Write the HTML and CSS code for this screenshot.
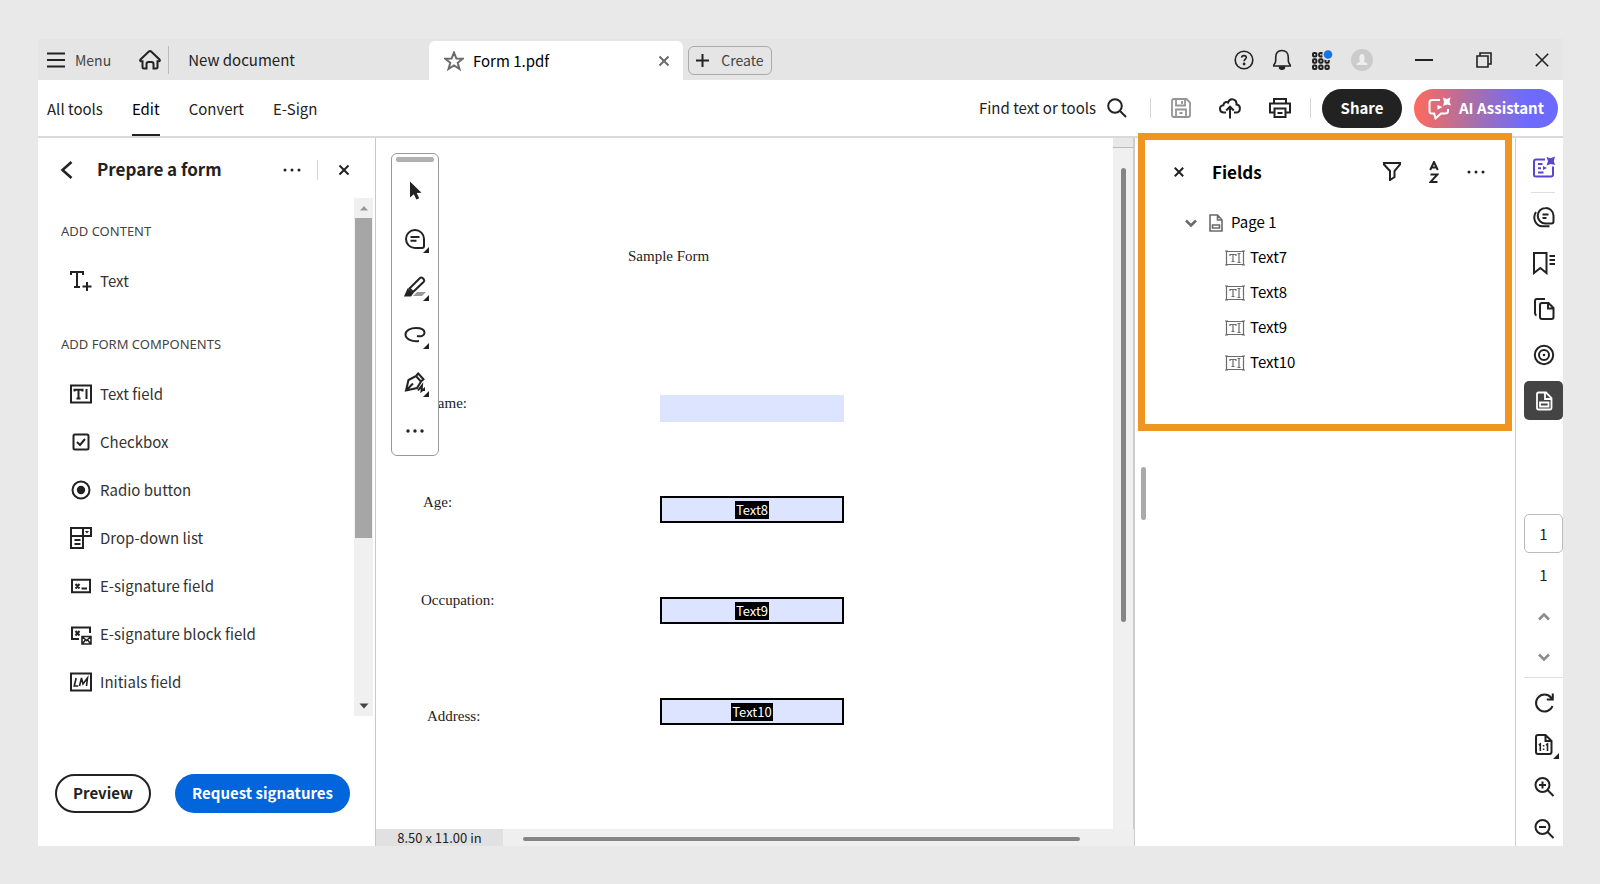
FILE: index.html
```html
<!DOCTYPE html>
<html lang="en">
<head>
<meta charset="utf-8">
<meta name="viewport" content="width=device-width, initial-scale=1">
<title>Form 1.pdf</title>
<link rel="stylesheet" href="styles.css">
</head>
<body>
<div class="app">
  <header class="titlebar">
    <button class="menu-btn"><svg class="icon" width="18" height="16" viewBox="0 0 18 16"><path d="M0 1.500h18M0 8h18M0 14.500h18"/></svg>Menu</button>
    <button class="home-btn" aria-label="Home"><svg class="icon" width="22" height="20" viewBox="0 0 22 20"><path d="M1.500 9.500 9.600 1.700q1.400-1.300 2.800 0l8.100 7.800q1 1.500-.5 1.800h-1.500v5.700q0 1.500-1.500 1.500h-2.500v-4.500q0-2-2-2h-3q-2 0-2 2v4.500H5q-1.500 0-1.500-1.500v-5.700H2q-1.500-.3-.5-1.800z"/></svg></button>
    <button class="tab-plain">New document</button>
    <div class="tab-active">
      <svg class="icon grey" width="20" height="20" viewBox="0 0 20 20"><path d="m10 1.500 2.400 6 6.300.3-5 4 1.800 6.200-5.500-3.500L4.500 18l1.800-6.200-5-4 6.300-.3z"/></svg>
      <span class="tab-name">Form 1.pdf</span>
      <button class="icon-btn" aria-label="Close tab"><svg class="icon grey" width="12" height="12" viewBox="0 0 12 12"><path d="m1.500 1.500 9 9m0-9-9 9"/></svg></button>
    </div>
    <button class="create-btn"><svg class="icon" width="13" height="13" viewBox="0 0 13 13"><path d="M6.500 0v13M0 6.500h13"/></svg>Create</button>
    <div class="title-actions">
      <button class="icon-btn" aria-label="Help"><svg class="icon thin" width="20" height="20" viewBox="0 0 20 20"><circle cx="10" cy="10" r="8.800"/><path d="M7.600 7.600q.2-2 2.400-2t2.300 1.900c0 1.600-2.200 1.700-2.200 3.700"/><circle class="solid" cx="10.100" cy="14" r=".6"/></svg></button>
      <button class="icon-btn" aria-label="Notifications"><svg class="icon thin" width="20" height="22" viewBox="0 0 20 22"><path d="M1.700 17h16.600c.5-1.500-2-2-2-5.500V8.500c0-5-3-7-6.300-7s-6.300 2-6.300 7v3c0 3.500-2.500 4-2 5.500z"/><path class="solid" d="M7.500 18h5c0 3-5 3-5 0z"/></svg></button>
      <button class="icon-btn" aria-label="Apps"><svg class="icon" width="23" height="21" viewBox="-2 0 23 21"><g><rect x="1" y="3" width="3.400" height="3.400" rx="1"/><rect x="7.200" y="3" width="3.400" height="3.400" rx="1"/><rect x="1" y="9.300" width="3.400" height="3.400" rx="1"/><rect x="7.200" y="9.300" width="3.400" height="3.400" rx="1"/><rect x="13.400" y="9.300" width="3.400" height="3.400" rx="1"/><rect x="1" y="15.600" width="3.400" height="3.400" rx="1"/><rect x="7.200" y="15.600" width="3.400" height="3.400" rx="1"/><rect x="13.400" y="15.600" width="3.400" height="3.400" rx="1"/></g><circle cx="15.500" cy="5" r="5.300" fill="#e5e5e5" stroke="none"/><circle cx="16" cy="4.500" r="4.300" fill="#1473e6" stroke="none"/></svg></button>
      <button class="icon-btn" aria-label="Account"><svg width="22" height="22" viewBox="0 0 22 22"><circle cx="11" cy="11" r="11" fill="#cbcbcb"/><path fill="#eee" d="M5.500 16v-1.500l3.800-2C8 11 7.600 5 11 5s3 6 1.700 7.500l3.800 2V16z"/></svg></button>
    </div>
    <div class="window-actions">
      <button class="icon-btn" aria-label="Minimize"><svg class="icon" width="18" height="18" viewBox="0 0 18 18"><path d="M0 9h18"/></svg></button>
      <button class="icon-btn" aria-label="Restore"><svg class="icon thin" width="16" height="16" viewBox="0 0 16 16"><path d="M1 4h11v11H1zM4 4V1h11v11h-3"/></svg></button>
      <button class="icon-btn" aria-label="Close"><svg class="icon thin" width="14" height="14" viewBox="0 0 14 14"><path d="m.8.8 12.400 12.400m0-12.400L.8 13.200"/></svg></button>
    </div>
  </header>

  <div class="toolbar">
    <nav class="modes">
      <a class="mode" href="#tools">All tools</a>
      <a class="mode current" href="#edit">Edit</a>
      <a class="mode" href="#convert">Convert</a>
      <a class="mode" href="#sign">E-Sign</a>
    </nav>
    <div class="toolbar-actions">
      <button class="find-btn">Find text or tools<svg class="icon" width="20" height="20" viewBox="0 0 20 20"><circle cx="8" cy="8" r="6.800"/><path d="m13 13 6 6"/></svg></button>
      <span class="vrule"></span>
      <button class="icon-btn" aria-label="Save"><svg class="icon pale" width="20" height="20" viewBox="0 0 20 20"><path d="M3 1h12.500L19 4.500V17q0 2-2 2H3q-2 0-2-2V3q0-2 2-2zM5 1.500v6h9v-6M11 3v3M5 18.500v-7h10v7M8.500 15h3"/></svg></button>
      <button class="icon-btn upload" aria-label="Upload"><svg class="icon" width="22" height="21" viewBox="0 0 22 21"><path d="M7 14.500H5C-.2 14.500-.2 7.300 4.400 7.200 4.500 4 8 3.400 9 4.600 11-1 18 1 17.500 6.500c4.700.5 4.500 8-.5 8h-2M11 20.500V9M7.200 12.500 11 8.700l3.800 3.800"/></svg></button>
      <button class="icon-btn print" aria-label="Print"><svg class="icon" width="22" height="20" viewBox="0 0 22 20"><path d="M5 5V1h12v4M5 14.500H1V5.500h20v9h-4M5.500 10.500h11V19h-11zM8.500 15h5"/></svg></button>
      <span class="vrule"></span>
      <button class="pill share">Share</button>
      <button class="pill ai"><svg class="icon" width="24" height="23" viewBox="0 0 24 23"><path d="M12 3H4Q1.500 3 1.500 5.500V14q0 2.500 2.500 2.500h2.200l1.300 5 5.500-5h4q3 0 3-2.500v-2"/><path class="solid" d="m15 .5 3.500 1.500L22.500.500 21.500 4.500l1.500 4-4-1L15 9l1-4zM9.500 8l5 2-5 2.800z"/></svg>AI Assistant</button>
    </div>
  </div>

  <main class="workspace">
    <aside class="panel">
      <div class="panel-head">
        <button class="icon-btn" aria-label="Back"><svg class="icon heavy" width="13" height="18" viewBox="0 0 13 18"><path d="M11.500 1 2.500 9l9 8"/></svg></button>
        <h1 class="panel-title">Prepare a form</h1>
        <button class="icon-btn" aria-label="More options"><svg class="dots" width="18" height="4" viewBox="0 0 18 4"><circle cx="2" cy="2" r="1.500"/><circle cx="9" cy="2" r="1.500"/><circle cx="16" cy="2" r="1.500"/></svg></button>
        <span class="vrule"></span>
        <button class="icon-btn" aria-label="Close panel"><svg class="icon" width="12" height="12" viewBox="0 0 12 12"><path d="m1.500 1.500 9 9m0-9-9 9"/></svg></button>
      </div>
      <div class="panel-scroll">
        <div class="tool-list">
          <h2 class="group-name">ADD CONTENT</h2>
          <button class="tool"><svg class="icon" width="22" height="22" viewBox="0 0 22 22"><path d="M1 5V2h12v3M7 2v15M4 17h6M17 12v9M12.500 16.500h9"/></svg>Text</button>
          <h2 class="group-name second">ADD FORM COMPONENTS</h2>
          <button class="tool"><svg class="icon" width="22" height="22" viewBox="0 0 22 22"><path d="M1 2.500h20v17H1zM4.500 8.500V6.700h8v1.800M8.500 7v8.500M6.500 15.500h4M16.500 6v10"/></svg>Text field</button>
          <button class="tool"><svg class="icon" width="22" height="22" viewBox="0 0 22 22"><rect x="3.500" y="3.500" width="15" height="15" rx="1.500"/><path d="m7 11 3 3 5-6"/></svg>Checkbox</button>
          <button class="tool"><svg class="icon" width="22" height="22" viewBox="0 0 22 22"><circle cx="11" cy="11" r="8.500"/><circle class="solid" cx="11" cy="11" r="3.200"/></svg>Radio button</button>
          <button class="tool"><svg class="icon" width="22" height="22" viewBox="0 0 22 22"><path d="M1 1h20v8H1zM13 1v20H1V9M4.500 13h6M4.500 17h6"/><path class="corner" d="M15 4h4l-2 2.500z"/></svg>Drop-down list</button>
          <button class="tool"><svg class="icon" width="22" height="22" viewBox="0 0 22 22"><path d="M2 4.800h18v12.400H2zM5.500 9l4 4.500m0-4.500-4 4.500M11.500 13.500h5.500"/></svg>E-signature field</button>
          <button class="tool"><svg class="icon thin" width="22" height="22" viewBox="0 0 22 22"><path stroke-width="2" d="M9 16H2V4.500h18V10M5.500 8l4 4.500M9.500 8l-4 4.500"/><path d="M12 13.500h9V21h-9zl4.500 4 4.500-4M12 21l3.500-4m5.500 4-3.500-4"/></svg>E-signature block field</button>
          <button class="tool"><svg class="icon thin" width="22" height="22" viewBox="0 0 22 22"><path stroke-width="2" d="M1 2.500h20v17H1z"/><path d="M6.200 7l-2 8h4M9.500 15l2-8 1.500 6 4.500-6-1 8"/></svg>Initials field</button>
        </div>
        <div class="scrollbar">
          <svg width="10" height="6" viewBox="0 0 10 6"><path fill="#999" d="M1 5.500 5 1l4 4.500z"/></svg>
          <span class="thumb"></span>
          <svg width="10" height="6" viewBox="0 0 10 6"><path fill="#444" d="M.5.500 5 5.500 9.500.500z"/></svg>
        </div>
      </div>
      <div class="panel-foot">
        <button class="pill preview">Preview</button>
        <button class="pill request">Request signatures</button>
      </div>
    </aside>

    <section class="viewer">
      <div class="page-area">
        <div class="page">
          <p class="doc-text doc-title">Sample Form</p>
          <label class="doc-text label-name" for="text7">Name:</label>
          <input class="field field-name" id="text7" type="text">
          <span class="doc-text label-age">Age:</span>
          <button class="field boxed field-age"><span class="tag">Text8</span></button>
          <span class="doc-text label-occupation">Occupation:</span>
          <button class="field boxed field-occupation"><span class="tag">Text9</span></button>
          <span class="doc-text label-address">Address:</span>
          <button class="field boxed field-address"><span class="tag">Text10</span></button>
          <div class="quickbar">
            <span class="grip"></span>
            <button class="quick" aria-label="Select"><svg width="28" height="28" viewBox="0 0 28 28"><path fill="#222" d="M9 4.500v16l3.800-3.200 2.600 5.200 2.800-1.300-2.500-5.200 4.800-.2z"/></svg></button>
            <button class="quick" aria-label="Comment"><svg class="icon" width="28" height="28" viewBox="0 0 28 28"><path d="M14 5a9 9 0 0 0 0 18h7q2 0 2-2v-7A9 9 0 0 0 14 5zM9.500 12h9M9.500 15.800h6"/><path class="corner" d="M28 22v6h-6z"/></svg></button>
            <button class="quick" aria-label="Highlight"><svg class="icon" width="28" height="28" viewBox="0 0 28 28"><path class="shade" d="M16 19h9l-4 4h-9z"/><path d="M8.500 15.500 19 5q1.200-1 2.500 0l1.300 1.300q1 1.200 0 2.400L12 19z"/><path class="solid" d="m7 17 4 3.500-1.500 2H4.500z"/><path class="corner" d="M28 22v6h-6z"/></svg></button>
            <button class="quick" aria-label="Draw"><svg class="icon" width="28" height="28" viewBox="0 0 28 28"><path d="M18 20C11 21 4.500 18 4.500 13.500 4.500 9 10 7 15 7c5 0 8.500 1.800 8.500 4.800S20 16 16 15"/><path class="corner" d="M28 22v6h-6z"/></svg></button>
            <button class="quick" aria-label="Sign"><svg class="icon" width="28" height="28" viewBox="0 0 28 28"><path d="M5 21.500 7.500 11l7.500-4 5 5.500-4 6.500zL12 14.500M15 7l2.200-2.500 5.300 5.700-2.500 2.300M17 21.500l4-5-.5 5.500 2.500-2v2"/><path class="corner" d="M28 22v6h-6z"/></svg></button>
            <button class="quick" aria-label="More tools"><svg class="dots" width="18" height="4" viewBox="0 0 18 4"><circle cx="2" cy="2" r="1.700"/><circle cx="9" cy="2" r="1.700"/><circle cx="16" cy="2" r="1.700"/></svg></button>
          </div>
        </div>
        <div class="vscroll"><span class="vsplit"></span><span class="vthumb"></span></div>
      </div>
      <div class="statusbar">
        <span class="page-size">8.50 x 11.00 in</span>
        <div class="hscroll"><span class="hthumb"></span></div>
      </div>
    </section>

    <aside class="fields">
      <div class="fields-head">
        <button class="icon-btn" aria-label="Close fields"><svg class="icon" width="10" height="10" viewBox="0 0 10 10"><path d="m.8.800 8.400 8.400m0-8.400L.8 9.200"/></svg></button>
        <h2 class="fields-title">Fields</h2>
        <button class="icon-btn" aria-label="Filter"><svg class="icon" width="18" height="19" viewBox="0 0 18 19"><path d="M1 1h16v1.500L11.500 9v6L7 18V9L1 2.500z"/></svg></button>
        <button class="icon-btn" aria-label="Sort"><svg class="icon" width="10" height="22" viewBox="0 0 10 22"><path d="M1.200 9 5 1l3.800 8M2.500 6.500h5M1.500 13.500h7l-7 7.500h7"/></svg></button>
        <button class="icon-btn" aria-label="More options"><svg class="dots" width="18" height="4" viewBox="0 0 18 4"><circle cx="2" cy="2" r="1.500"/><circle cx="9" cy="2" r="1.500"/><circle cx="16" cy="2" r="1.500"/></svg></button>
      </div>
      <ul class="tree">
        <li class="node root"><svg class="icon grey heavy" width="12" height="8" viewBox="0 0 12 8"><path d="m1 1.500 5 5 5-5"/></svg><svg class="icon grey thin" width="14" height="18" viewBox="0 0 14 18"><path d="M1 1h7.500L13 6v11H1zM8.500 1v5H13M3.500 11h7v3h-7z"/></svg><span>Page 1</span></li>
        <li class="node leaf"><svg class="icon grey hair" width="20" height="16" viewBox="0 0 20 16"><path d="M1.500 1.500h17v13h-17zM5 6V4.500h6V6M8 4.500v7M6.500 11.500h3M12.500 3.500h3M14 3.500v9M12.500 12.500h3"/><path d="M0 1h3M17 1h3M0 15h3M17 15h3"/></svg><span>Text7</span></li>
        <li class="node leaf"><svg class="icon grey hair" width="20" height="16" viewBox="0 0 20 16"><path d="M1.500 1.500h17v13h-17zM5 6V4.500h6V6M8 4.500v7M6.500 11.500h3M12.500 3.500h3M14 3.500v9M12.500 12.500h3"/><path d="M0 1h3M17 1h3M0 15h3M17 15h3"/></svg><span>Text8</span></li>
        <li class="node leaf"><svg class="icon grey hair" width="20" height="16" viewBox="0 0 20 16"><path d="M1.500 1.500h17v13h-17zM5 6V4.500h6V6M8 4.500v7M6.500 11.500h3M12.500 3.500h3M14 3.500v9M12.500 12.500h3"/><path d="M0 1h3M17 1h3M0 15h3M17 15h3"/></svg><span>Text9</span></li>
        <li class="node leaf"><svg class="icon grey hair" width="20" height="16" viewBox="0 0 20 16"><path d="M1.500 1.500h17v13h-17zM5 6V4.500h6V6M8 4.500v7M6.500 11.500h3M12.500 3.500h3M14 3.500v9M12.500 12.500h3"/><path d="M0 1h3M17 1h3M0 15h3M17 15h3"/></svg><span>Text10</span></li>
      </ul>
      <span class="splitter"></span>
      <div class="callout"></div>
    </aside>

    <nav class="rail">
      <div class="rail-top">
        <button class="rail-btn ai-mark" aria-label="AI summary"><svg class="icon violet" width="24" height="24" viewBox="0 0 24 24"><path d="M13 4.500H4q-2 0-2 2V20q0 1.500 2 1.500h15q2 0 2-2v-8M6 9h4.500M6 13.200h3M6 17.500h5.500"/><path class="corner" d="m14.500 2 4 1.200L23 1.500 21.800 6 23 10l-4-1-4.500 1.500L16 6zM11 11l4 2-4 2z"/></svg></button>
        <span class="hrule short"></span>
        <button class="rail-btn" aria-label="Comments"><svg class="icon" width="24" height="24" viewBox="0 0 24 24"><path d="M13.500 3a7.800 7.800 0 0 0 0 15.600h6q2 0 2-2v-6A7.800 7.800 0 0 0 13.500 3zM10.500 9.500h6M10.500 13h4M4 7c-4 6-.5 14 6.500 14.300h7"/></svg></button>
        <button class="rail-btn" aria-label="Bookmarks"><svg class="icon" width="24" height="24" viewBox="0 0 24 24"><path d="M2 2h12.500v20l-6.200-5L2 22zM17.500 5h5.500M17.500 9h5.500M17.500 13h5.500"/></svg></button>
        <button class="rail-btn" aria-label="Pages"><svg class="icon" width="24" height="24" viewBox="0 0 24 24"><path d="M10 6h6.500l5 5v9q0 2-2 2H10q-2 0-2-2V8q0-2 2-2zM16 6v5.500h5.500M13 2H5Q3 2 3 4v12q0 2 1.500 2.500"/></svg></button>
        <button class="rail-btn" aria-label="Destinations"><svg class="icon" width="24" height="24" viewBox="0 0 24 24"><circle cx="12" cy="12" r="9.200"/><circle cx="12" cy="12" r="5"/><circle class="corner" cx="12" cy="12" r="1.300"/></svg></button>
        <button class="rail-btn active" aria-label="Fields"><svg class="icon white" width="24" height="24" viewBox="0 0 24 24"><path d="M6.500 3.500H14l5.500 5.500v10q0 1.500-1.500 1.500H6.500Q5 20.500 5 19V5q0-1.500 1.500-1.500zM13 3.500V10h6.500M8 13.500h8.500v4H8z"/></svg></button>
      </div>
      <div class="rail-bottom">
        <input class="page-input" type="text" value="1" aria-label="Page number">
        <span class="page-total">1</span>
        <button class="rail-step" aria-label="Previous page"><svg class="icon mid heavy" width="12" height="8" viewBox="0 0 12 8"><path d="m1 6.500 5-5 5 5"/></svg></button>
        <button class="rail-step" aria-label="Next page"><svg class="icon mid heavy" width="12" height="8" viewBox="0 0 12 8"><path d="m1 1.500 5 5 5-5"/></svg></button>
        <span class="hrule"></span>
        <div class="rail-zooms">
          <button class="rail-zoom" aria-label="Rotate"><svg class="icon" width="24" height="24" viewBox="0 0 24 24"><path d="M20.500 15A8.500 8.500 0 1 1 19 6.500l1.500 1.500M20.800 2.500V8.500h-6"/></svg></button>
          <button class="rail-zoom" aria-label="Actual size"><svg class="icon" width="30" height="28" viewBox="0 0 30 28"><path d="M9 4h7.500l6 6v11q0 2-2 2H9q-2 0-2-2V6q0-2 2-2zM16.500 4v6h6"/><path stroke-width="1.600" d="m9.800 14 1.500-1v7M17 14l1.500-1v7"/><path class="corner" d="M13.800 14h1.600v1.600h-1.600zM13.800 17.500h1.600v1.600h-1.600zM30 22v6h-6z"/></svg></button>
          <button class="rail-zoom" aria-label="Zoom in"><svg class="icon" width="24" height="24" viewBox="0 0 24 24"><circle cx="10.500" cy="10" r="7"/><path d="m15.500 15 6 6M7 10h7M10.500 6.500v7"/></svg></button>
          <button class="rail-zoom" aria-label="Zoom out"><svg class="icon" width="24" height="24" viewBox="0 0 24 24"><circle cx="10.500" cy="10" r="7"/><path d="m15.500 15 6 6M7 10h7"/></svg></button>
        </div>
      </div>
    </nav>
  </main>
</div>
</body>
</html>
```

FILE: styles.css
```css
* { box-sizing: border-box; }
html, body { height: 100%; }
body {
  margin: 0;
  padding: 39px 37px 38px 38px;
  background: #e9e9e9;
  color: #222;
  font: 15px/20px "Noto Sans CJK SC", "Noto Sans", sans-serif;
}
button, input { font: inherit; color: inherit; margin: 0; padding: 0; border: 0; background: none; }
button { cursor: pointer; white-space: nowrap; display: flex; align-items: center; justify-content: center; }
h1, h2, p, ul { margin: 0; padding: 0; }
svg { display: block; flex: none; }
.icon { fill: none; stroke: #222; stroke-width: 2; }
.icon.thin { stroke-width: 1.6; }
.icon.hair { stroke-width: 1.2; }
.icon.heavy { stroke-width: 2.6; }
.icon.grey { stroke: #6b6b6b; }
.icon.mid { stroke: #8c8c8c; }
.icon.pale { stroke: #959595; stroke-width: 1.8; }
.icon.white { stroke: #fff; stroke-width: 1.8; }
.icon.violet { stroke: #5a45d1; }
.solid { fill: #222; }
.corner { fill: #222; stroke: none; }
.violet .corner { fill: #5a45d1; }
.shade { fill: #999; stroke: none; }
.dots { fill: #222; }
.vrule { width: 1px; height: 20px; background: #d5d5d5; }
.hrule { width: 39px; height: 1px; background: #dedede; }
.hrule.short { width: 24px; margin-right: 8px; }

.app { display: flex; flex-direction: column; height: 100%; background: #fff; }

.titlebar { display: flex; align-items: center; flex: none; height: 41px; padding-top: 1px; background: #e5e5e5; }
.menu-btn { gap: 10px; margin-left: 9px; font-size: 14px; color: #444; }
.home-btn { margin-left: 28px; padding-right: 7px; height: 28px; border-right: 1px solid #bbb; }
.tab-plain { margin-left: 19px; }
.tab-active {
  display: flex; align-items: center; gap: 9px; width: 254px; height: 39px;
  margin: 1px 5px 0 134px; padding: 0 13px 0 15px; background: #fff;
  border-radius: 6px 6px 0 0; color: #000;
}
.tab-name { flex: 1; }
.create-btn { width: 84px; height: 29px; gap: 12px; border: 1px solid #aaa; border-radius: 6px; font-size: 14px; color: #444; }
.title-actions { display: flex; gap: 18px; align-items: center; margin-left: auto; }
.window-actions { display: flex; gap: 43px; align-items: center; margin: 0 14px 0 42px; }

.toolbar { display: flex; justify-content: space-between; flex: none; height: 58px; border-bottom: 2px solid #dadada; }
.modes { display: flex; gap: 29px; margin-left: 9px; }
.mode { padding-top: 19px; color: #222; text-decoration: none; border-bottom: 2px solid transparent; }
.mode.current { color: #000; border-color: #222; }
.toolbar-actions { display: flex; align-items: center; margin-right: 5px; }
.find-btn { gap: 11px; margin-right: 23px; }
.toolbar-actions .icon-btn { margin-left: 20px; }
.toolbar-actions .upload, .toolbar-actions .print { margin-left: 28px; }
.print { margin-right: 19px; }
.pill { height: 39px; border-radius: 20px; font-weight: 700; }
.share { width: 80px; margin-left: 11px; background: #222; color: #fff; }
.ai { width: 144px; margin-left: 12px; gap: 7px; color: #fff; background: linear-gradient(90deg, #ff6a5c, #a96fa8 40%, #6d6bff 78%); }
.ai .icon { stroke: #fff; }
.ai .solid { fill: #fff; stroke: none; }

.workspace { flex: 1; min-height: 0; display: grid; grid-template-columns: 338px minmax(0, 1fr) 381px 48px; }

.panel { display: flex; flex-direction: column; min-height: 0; border-right: 1px solid #c8c8c8; }
.panel-head { display: flex; align-items: center; height: 60px; padding: 3px 25px 0 22px; }
.panel-title { flex: 1; margin-left: 24px; padding-bottom: 2px; font-size: 17px; line-height: 22px; font-weight: 700; }
.panel-head .vrule { margin: 0 20px 0 16px; }
.panel-scroll { display: flex; justify-content: space-between; flex: none; height: 518px; overflow: hidden; }
.tool-list { padding: 24px 0 0 23px; }
.group-name { margin-bottom: 17px; font: 400 13px/18px "Noto Sans", sans-serif; color: #444; }
.group-name.second { margin-top: 30px; }
.tool { height: 48px; gap: 8px; padding-left: 9px; color: #333; }
.scrollbar { display: flex; flex-direction: column; align-items: center; width: 19px; margin-right: 2px; padding: 7px 0; background: #f0f0f0; }
.thumb { width: 17px; height: 320px; margin: 7px 0 auto; background: #a6a6a6; }
.panel-foot { display: flex; gap: 24px; margin-top: auto; padding: 0 0 33px 17px; }
.panel-foot .pill { padding-bottom: 2px; }
.preview { width: 96px; border: 2px solid #222; }
.request { width: 175px; background: #0265dc; color: #fff; }

.viewer { display: flex; flex-direction: column; min-width: 0; }
.page-area { display: flex; flex: 1; min-height: 0; }
.page { position: relative; flex: 1; }
.doc-text { position: absolute; font: 15px/18px "Liberation Serif", serif; color: #222; }
.doc-title { left: 252px; top: 109px; }
.label-name { left: 51px; top: 256px; }
.label-age { left: 47px; top: 355px; }
.label-occupation { left: 45px; top: 453px; }
.label-address { left: 51px; top: 569px; }
.field { position: absolute; left: 284px; width: 184px; height: 27px; background: #dce4ff; }
.boxed { border: 2px solid #000; }
.tag { padding: 0 1px; background: #000; color: #fff; font-size: 13px; line-height: 18px; }
.field-name { top: 257px; }
.field-age { top: 358px; }
.field-occupation { top: 459px; }
.field-address { top: 560px; }
.quickbar { position: absolute; left: 15px; top: 15px; width: 48px; padding: 3px 4px 0; background: #fff; border: 1px solid #999; border-radius: 6px; }
.grip { display: block; height: 5px; margin-bottom: 5px; background: #b1b1b1; border-radius: 2px; }
.quick { width: 38px; height: 48px; }
.vscroll { width: 21px; background: #f0f0f0; border-right: 1px solid #ccc; }
.vsplit { display: block; height: 10px; margin-bottom: 20px; background: #e8e8e8; border-bottom: 1px solid #bbb; }
.vthumb { display: block; width: 5px; height: 454px; margin-left: 8px; border-radius: 3px; background: #858585; }
.statusbar { display: flex; height: 17px; background: #efefef; font-size: 13px; line-height: 17px; }
.page-size { width: 127px; text-align: center; background: #e1e1e1; color: #222; }
.hscroll { flex: 1; padding: 8px 54px 0 20px; }
.hthumb { display: block; height: 4px; border-radius: 2px; background: #858585; }

.fields { position: relative; border-left: 1px solid #ccc; }
.fields-head { display: flex; align-items: center; height: 60px; padding: 7px 30px 0 39px; }
.fields-title { flex: 1; margin-left: 28px; font-size: 17px; line-height: 22px; font-weight: 700; color: #000; }
.fields-head .icon-btn + .icon-btn { margin-left: 28px; }
.tree { list-style: none; padding: 6px 0 0 50px; color: #000; }
.node { display: flex; align-items: center; height: 35px; }
.node .icon { margin-top: 3px; }
.root { gap: 12px; }
.root span { margin-left: -4px; }
.leaf { gap: 5px; padding-left: 40px; }
.splitter { position: absolute; left: 6px; top: 329px; width: 5px; height: 53px; border-radius: 3px; background: #aaa; }
.callout { position: absolute; left: 3px; right: 3px; top: -5px; height: 298px; border: 7px solid #f19522; pointer-events: none; }

.rail { display: flex; flex-direction: column; justify-content: space-between; border-left: 1px solid #ccc; }
.rail-top, .rail-bottom { display: flex; flex-direction: column; align-items: flex-end; }
.rail-top { padding-top: 9px; }
.rail-btn { width: 39px; height: 39px; margin-bottom: 7px; }
.ai-mark { margin-bottom: 6px; }
.rail-top .hrule { margin-bottom: 4px; }
.active { background: #444; border-radius: 5px; }
.page-input { width: 39px; height: 39px; border: 1px solid #bbb; border-radius: 5px; text-align: center; }
.page-total { width: 39px; padding: 12px 0; text-align: center; }
.rail-step { width: 39px; height: 40px; }
.rail-bottom .hrule { margin-bottom: 8px; }
.rail-zooms { display: flex; flex-direction: column; gap: 8px; }
.rail-zoom { width: 39px; height: 34px; }
```
